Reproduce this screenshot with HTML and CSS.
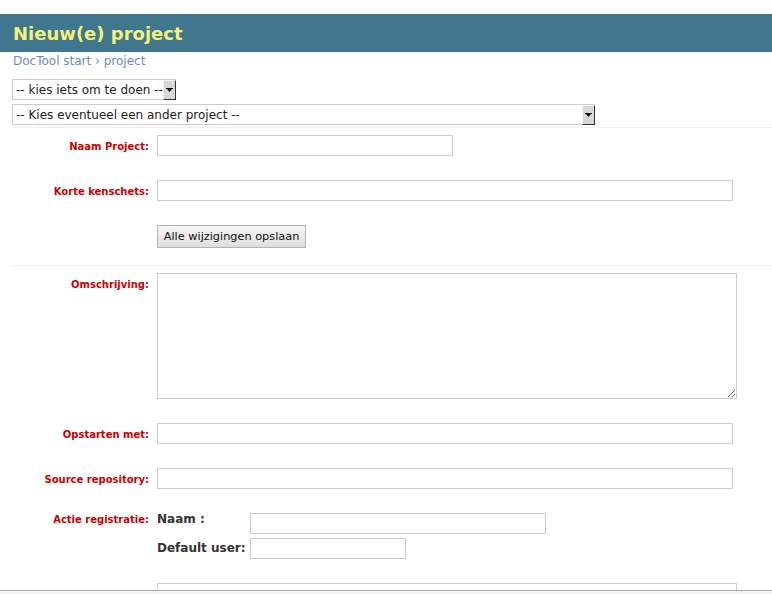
FILE: index.html
```html
<!DOCTYPE html>
<html lang="nl">
  <head>
    <meta charset="UTF-8" />
    <meta name="viewport" content="width=device-width, initial-scale=1.0" />
    <title>Nieuw(e) project</title>
    <link rel="stylesheet" href="styles.css">
  </head>
  <body>
    <div class="head">
      <h1 class="head__title">Nieuw(e) project</h1>
    </div>
    <div class="crumbs"><a href="#">DocTool start</a> › <a href="#">project</a></div>

    <div class="content">
      <div class="pick pick--short">
        <span class="pick__text">-- kies iets om te doen --</span>
        <span class="pick__btn"><svg width="7" height="5" viewBox="0 0 7 5"><path d="M0 0h7v1H0zM1 1h5L3.5 4z" fill="#111"/></svg></span>
      </div>
      <div class="pick pick--long">
        <span class="pick__text">-- Kies eventueel een ander project --</span>
        <span class="pick__btn"><svg width="7" height="5" viewBox="0 0 7 5"><path d="M0 0h7v1H0zM1 1h5L3.5 4z" fill="#111"/></svg></span>
      </div>
      <div class="sep"></div>

      <form class="form">
        <div class="form__row">
          <label class="form__label">Naam Project:</label>
          <input class="form__input form__input--short" type="text">
        </div>
        <div class="form__row">
          <label class="form__label">Korte kenschets:</label>
          <input class="form__input" type="text">
        </div>
        <div class="form__row form__row--save">
          <span></span>
          <button class="form__button" type="button">Alle wijzigingen opslaan</button>
        </div>
      </form>
      <div class="sep"></div>

      <form class="form">
        <div class="form__row">
          <label class="form__label">Omschrijving:</label>
          <textarea class="form__area"></textarea>
        </div>
        <div class="form__row">
          <label class="form__label">Opstarten met:</label>
          <input class="form__input" type="text">
        </div>
        <div class="form__row">
          <label class="form__label">Source repository:</label>
          <input class="form__input" type="text">
        </div>
        <div class="form__row">
          <label class="form__label form__label--flush">Actie registratie:</label>
          <div class="sub">
            <span class="sub__label sub__label--first">Naam :</span>
            <input class="form__input form__input--short" type="text">
            <span class="sub__label">Default user:</span>
            <input class="form__input form__input--tiny" type="text">
          </div>
        </div>
        <div class="form__row">
          <label class="form__label">Opmerkingen:</label>
          <textarea class="form__area"></textarea>
        </div>
      </form>
    </div>

    <div class="statusbar"></div>
  </body>
</html>
```

FILE: styles.css
```css
* {
  box-sizing: border-box;
}
html {
  overflow: hidden;
}
body {
  margin: 0;
  padding-top: 14px;
  font-family: "DejaVu Sans", sans-serif;
  color: #222;
}

.head {
  background-color: #41768f;
  padding: 9px 13px 8px;
}
.head__title {
  margin: 0;
  font-size: 18px;
  line-height: 21px;
  color: #f2f27a;
}

.crumbs {
  padding: 2px 0 0 13px;
  font-size: 12px;
  line-height: 14px;
  color: #6a8cc7;
}
.crumbs a {
  color: #6a8cc7;
  text-decoration: none;
}

.content {
  padding-left: 12px;
}

.pick {
  display: flex;
  height: 21px;
  border: 1px solid #ccc;
  border-right: none;
  font-size: 12px;
  background: #fff;
}
.pick--short {
  width: 164px;
  margin-top: 11px;
}
.pick--long {
  width: 583px;
  margin-top: 4px;
  margin-bottom: 2px;
}
.pick__text {
  flex: 1;
  display: flex;
  align-items: center;
  padding-left: 3px;
  white-space: nowrap;
}
.pick__btn {
  width: 13px;
  margin-bottom: -1px;
  display: flex;
  align-items: center;
  justify-content: center;
  background: #d8d8d8;
  border: 1px solid;
  border-color: #f4f4f4 #333 #333 #f4f4f4;
}

.sep {
  height: 1px;
  background: #eee;
  margin-bottom: 7px;
}

.form__row {
  display: grid;
  grid-template-columns: 137px auto;
  column-gap: 8px;
  justify-content: start;
  align-items: start;
  margin-bottom: 24px;
}
.form__row--save {
  margin-bottom: 17px;
}
.form__label {
  padding-top: 6px;
  text-align: right;
  font-size: 10px;
  font-weight: bold;
  color: #cc0000;
}
.form__label--flush {
  padding-top: 1px;
}
.form__input {
  width: 576px;
  height: 21px;
  margin: 0;
  border: 1px solid #ccc;
  font-family: inherit;
  font-size: 12px;
}
.form__input--short {
  width: 296px;
}
.form__input--tiny {
  width: 156px;
}
.form__area {
  display: block;
  width: 580px;
  height: 126px;
  margin: 0;
  border: 1px solid #ccc;
  font-family: inherit;
  font-size: 12px;
}
.form__button {
  width: 149px;
  height: 23px;
  padding: 0 4px;
  margin: 0;
  border: 1px solid #b4b4b4;
  background: linear-gradient(#f6f6f6, #dedede);
  font-family: inherit;
  font-size: 11.3px;
  color: #111;
}

.sub {
  display: grid;
  grid-template-columns: 93px auto;
  row-gap: 4px;
  align-items: start;
}
.sub__label {
  margin-top: 3px;
  font-size: 12px;
  line-height: 14px;
  font-weight: bold;
  color: #333;
}
.sub__label--first {
  margin-top: -1px;
}

.statusbar {
  position: fixed;
  left: 0;
  right: 0;
  bottom: 0;
  height: 4px;
  border-top: 1px solid #a8a8a8;
  background: #f2f2f2;
}
```
